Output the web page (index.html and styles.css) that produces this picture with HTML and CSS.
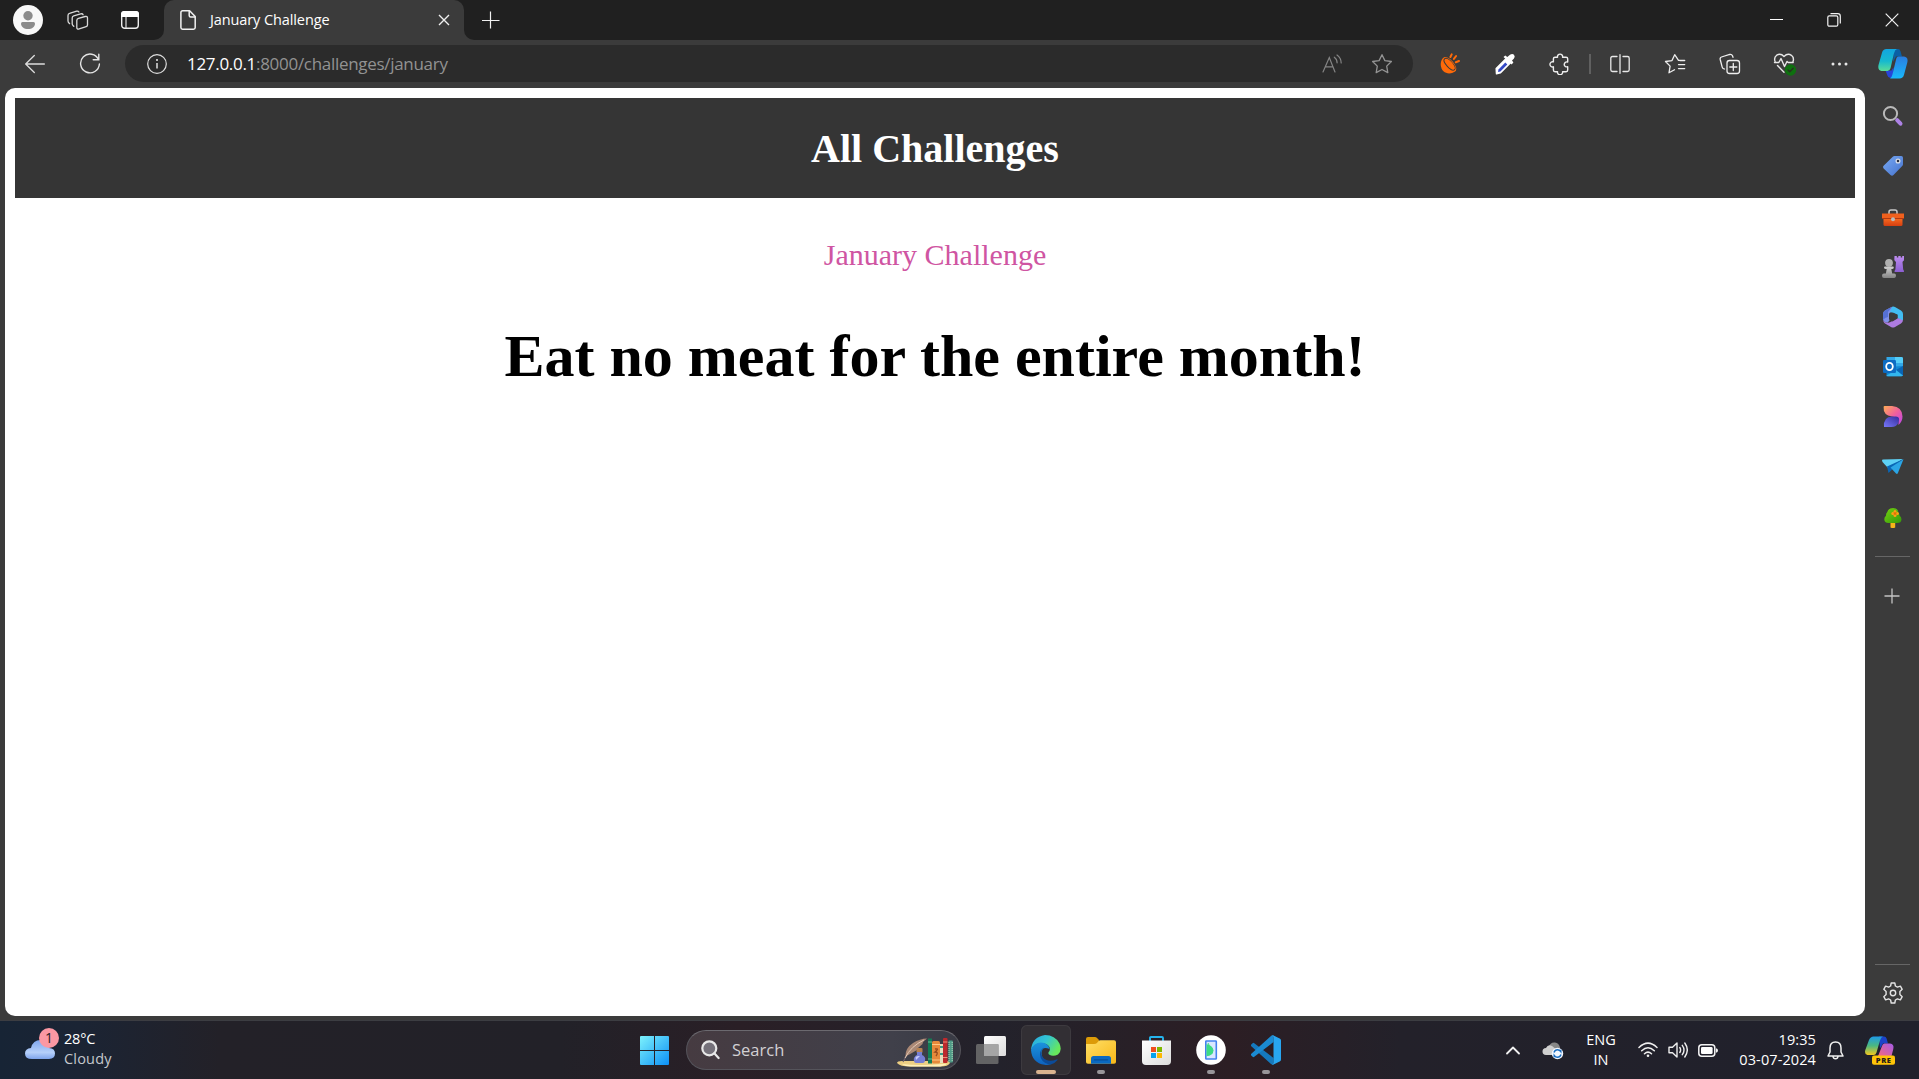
FILE: index.html
```html
<!DOCTYPE html>
<html lang="en">
<head>
<meta charset="utf-8">
<title>January Challenge</title>
<link rel="stylesheet" href="styles.css">
</head>
<body>
<svg width="0" height="0" class="defs" aria-hidden="true">
  <defs>
    <linearGradient id="cpA" x1="0" y1="0" x2="0" y2="1"><stop offset="0" stop-color="#12a5e0"/><stop offset=".55" stop-color="#16b9cf"/><stop offset="1" stop-color="#5bdc98"/></linearGradient>
    <linearGradient id="cpB" x1="0" y1="0" x2="0" y2="1"><stop offset="0" stop-color="#2a7de0"/><stop offset="1" stop-color="#19b8fb"/></linearGradient>
    <linearGradient id="cpC" x1="0" y1="0" x2="0" y2="1"><stop offset="0" stop-color="#1e9be8"/><stop offset=".5" stop-color="#4bb880"/><stop offset="1" stop-color="#f4c81e"/></linearGradient>
    <linearGradient id="cpD" x1="1" y1="0" x2="0" y2="1"><stop offset="0" stop-color="#a45be8"/><stop offset="1" stop-color="#ff6a70"/></linearGradient>
    <linearGradient id="tagG" x1="0" y1="0" x2="1" y2="1"><stop offset="0" stop-color="#79aaf4"/><stop offset="1" stop-color="#4572cc"/></linearGradient>
    <linearGradient id="purG" x1="0" y1="0" x2="0" y2="1"><stop offset="0" stop-color="#bd8cf0"/><stop offset="1" stop-color="#8c5fd2"/></linearGradient>
    <linearGradient id="grayG" x1="0" y1="0" x2="0" y2="1"><stop offset="0" stop-color="#d0d0d0"/><stop offset="1" stop-color="#858585"/></linearGradient>
    <linearGradient id="boxG" x1="0" y1="0" x2="0" y2="1"><stop offset="0" stop-color="#f5671f"/><stop offset="1" stop-color="#d63f10"/></linearGradient>
    <linearGradient id="desA" x1="0" y1="0" x2="1" y2="1"><stop offset="0" stop-color="#ffad55"/><stop offset=".5" stop-color="#f0619b"/><stop offset="1" stop-color="#b945ee"/></linearGradient>
    <linearGradient id="desB" x1="0" y1="1" x2="1" y2="0"><stop offset="0" stop-color="#7778fa"/><stop offset="1" stop-color="#352b9c"/></linearGradient>
    <linearGradient id="winG" x1="0" y1="0" x2="1" y2="1"><stop offset="0" stop-color="#7df2fc"/><stop offset="1" stop-color="#0c8ff5"/></linearGradient>
    <linearGradient id="cloudG" x1="0" y1="0" x2="0" y2="1"><stop offset="0" stop-color="#7ea6ee"/><stop offset=".65" stop-color="#b6d0fa"/><stop offset="1" stop-color="#7ea4ec"/></linearGradient>
    <linearGradient id="edgeG" x1="0" y1="0" x2="1" y2=".5"><stop offset="0" stop-color="#28a7de"/><stop offset=".5" stop-color="#32c4d4"/><stop offset="1" stop-color="#67e85c"/></linearGradient>
    <linearGradient id="edgeB" x1="0" y1="0" x2="0" y2="1"><stop offset="0" stop-color="#1b93dc"/><stop offset="1" stop-color="#0e62be"/></linearGradient>
    <linearGradient id="folG" x1="0" y1="0" x2="1" y2="1"><stop offset="0" stop-color="#ffdf66"/><stop offset="1" stop-color="#f7b718"/></linearGradient>
    <linearGradient id="tvG" x1="0" y1="0" x2="1" y2="1"><stop offset="0" stop-color="#fff"/><stop offset="1" stop-color="#dcdcdc"/></linearGradient>
    <linearGradient id="treeG" x1="0" y1="0" x2="1" y2="1"><stop offset="0" stop-color="#75d20f"/><stop offset="1" stop-color="#34990b"/></linearGradient>
  </defs>
</svg>
<div class="desktop">

  <header class="titlebar">
    <div class="titlebar-tools">
      <svg class="avatar" width="30" height="30" viewBox="0 0 30 30"><circle cx="15" cy="15" r="15" fill="#f8f8f8"/><circle cx="15" cy="10.800" r="4.700" fill="#8b8b8b"/><path d="M9.500 17h11q1.500 0 1.500 1.500c0 3.500-3 5.500-7 5.500s-7-2-7-5.500q0-1.500 1.500-1.500z" fill="#8b8b8b"/></svg>
      <svg class="workspaces" width="22" height="20" viewBox="0 0 22 20" fill="none" stroke="#d9d9d9" stroke-width="1.300" stroke-linejoin="round" stroke-linecap="round"><path d="M11.500 8.300l6.600-1.800q2.400-.6 2.400 1.600v7q0 1.200-1.300 1.600l-7 2.200q-2.400.8-2.400-1.500v-7q0-1.600 1.700-2.100z"/><path d="M6.800 16.300l-.6-.6q-1-.9-1-2V7.900q0-1.500 1.500-2l7-2q1.800-.5 2.400.8"/><path d="M2.600 13.600q-1.600-1-1.600-2.500V5.400Q1 3.800 2.500 3.400l7.200-2.200q1.500-.4 2.200.8"/></svg>
      <svg width="18" height="18" viewBox="0 0 18 18"><rect x=".7" y=".7" width="16.600" height="16.600" rx="3" fill="none" stroke="#eee" stroke-width="1.400"/><path d="M0 6V3q0-3 3-3h12q3 0 3 3v3z" fill="#fff"/><path d="M5 6v11" stroke="#ddd" stroke-width="1.200"/></svg>
    </div>
    <div class="tab">
      <svg width="16" height="20" viewBox="0 0 16 20" fill="none" stroke="#f2f2f2" stroke-width="1.500" stroke-linejoin="round"><path d="M2.600.8h7L15.200 6.500v11q0 1.700-1.700 1.700H2.600Q.9 19.200.9 17.500v-15Q.9.8 2.600.8z"/><path d="M9.200 1v4.400q0 1.500 1.500 1.500H15"/></svg>
      <span class="tab-title">January Challenge</span>
      <svg class="tab-close" width="12" height="12" viewBox="0 0 12 12" stroke="#f0f0f0" stroke-width="1.400"><path d="M1 1l10 10M11 1L1 11"/></svg>
    </div>
    <svg class="new-tab" width="18" height="18" viewBox="0 0 18 18" stroke="#f0f0f0" stroke-width="1.200"><path d="M8.500.5v17M0 9.500h17.500"/></svg>
    <div class="window-buttons">
      <span class="window-button"><svg width="13" height="13" viewBox="0 0 13 13"><path d="M0 6.500h13" stroke="#fff"/></svg></span>
      <span class="window-button"><svg width="14" height="14" viewBox="0 0 14 14" fill="none" stroke="#f2f2f2" stroke-width="1.200"><rect x=".8" y="2.800" width="10" height="10.400" rx="1.500"/><path d="M3.500.7h7.300q2.500 0 2.500 2.500v7.300"/></svg></span>
      <span class="window-button"><svg width="14" height="14" viewBox="0 0 14 14" stroke="#f2f2f2" stroke-width="1.200"><path d="M.7.7l12.600 12.600M13.300.7L.7 13.300"/></svg></span>
    </div>
  </header>

  <nav class="toolbar">
    <span class="slot"><svg width="20" height="20" viewBox="0 0 20 20" fill="none" stroke="#ddd" stroke-width="1.300" stroke-linecap="round" stroke-linejoin="round"><path d="M19.400 10H.8M9.300 1.500L.7 10l8.600 8.500"/></svg></span>
    <span class="slot"><svg width="22" height="22" viewBox="0 0 22 22" fill="none" stroke="#e4e4e4" stroke-width="1.400" stroke-linecap="round"><path d="M19.600 6.600A9.400 9.400 0 1 0 20.400 11M19.800 1.200v5.600h-5.600"/></svg></span>
    <div class="address">
      <svg width="20" height="20" viewBox="0 0 20 20"><circle cx="10" cy="10" r="9.300" fill="none" stroke="#dedede" stroke-width="1.200"/><circle cx="10" cy="6.100" r="1" fill="#eee"/><path d="M10 8.900v5.600" stroke="#eee" stroke-width="1.400"/></svg>
      <span class="url"><span class="url-host">127.0.0.1</span><span class="url-path">:8000/challenges/january</span></span>
      <svg class="read-aloud" width="20" height="20" viewBox="0 0 20 20" fill="none" stroke="#858585" stroke-width="1.200" stroke-linecap="round"><path d="M1 18L7.300 3.500 13 18M3.300 12.900h7.500M12.300 3.200q2.800 2 2.800 5.600M15 1q4.200 3 4.200 8"/></svg>
      <svg width="22" height="22" viewBox="0 0 22 22" fill="none" stroke="#949494" stroke-width="1.300" stroke-linejoin="round"><path d="M11 1.700l2.900 5.900 6.500.9-4.700 4.600 1.100 6.500-5.800-3.100-5.800 3.100 1.100-6.500L1.600 8.500l6.500-.9z"/></svg>
    </div>
    <span class="slot"><svg width="22" height="22" viewBox="0 0 22 22"><path d="M4 5C.8 8.500 1 15 4.500 18.300 8 21.500 13.500 21 17 17.500z" fill="#ff6a09"/><ellipse cx="10.500" cy="11.300" rx="9" ry="4.200" transform="rotate(47 10.500 11.300)" fill="#ff6a09"/><ellipse cx="10.500" cy="11.300" rx="7.300" ry="2.900" transform="rotate(47 10.500 11.300)" fill="none" stroke="#3b3b3b" stroke-width="1.100"/><ellipse cx="10.800" cy="11" rx="6.700" ry="2.500" transform="rotate(47 10.800 11)" fill="#ff6a09"/><path d="M11.400 4l1.300-2.600M14.900 5.900l2.200-2.900M16.800 9.300l3.200-1.300" stroke="#ff6a09" stroke-width="2" stroke-linecap="round"/></svg></span>
    <span class="slot"><svg width="22" height="22" viewBox="0 0 22 22"><path d="M2.200 15.600L12.700 5l4.300 4.300L6.500 19.800l-4 1z" fill="#fff" stroke="#fff" stroke-width="1.500" stroke-linejoin="round"/><path d="M4.500 16.500l6.800-6.900 2 2-6.900 6.900-2.400.6z" fill="#3449c6"/><path d="M9.500 4l1.800-1.500 2 1.500L16 1.800q2.300-1.600 4 0 1.600 1.800-.2 4L18 7.600l1.400 2-1.800 1.800z" fill="#fff"/></svg></span>
    <span class="slot"><svg width="22" height="22" viewBox="0 0 22 22" fill="none" stroke="#eee" stroke-width="1.400" stroke-linejoin="round"><path d="M8.500 4.200a2.600 2.600 0 1 1 5.100 0h3.500q1.600 0 1.600 1.600v3.300a2.500 2.500 0 1 0 0 4.600v3.400q0 1.600-1.600 1.600h-3.500a2.600 2.600 0 1 1-5.100 0H6q-1.600 0-1.600-1.600v-3.300a2.600 2.600 0 1 1 0-4.900V5.800q0-1.600 1.600-1.600z"/></svg></span>
    <span class="toolbar-divider"></span>
    <span class="slot"><svg width="20" height="20" viewBox="0 0 20 20" fill="none" stroke="#e8e8e8" stroke-width="1.300" stroke-linecap="round"><path d="M7 2.500H2.500Q.8 2.500.8 4.200v11.600q0 1.700 1.700 1.700H7M13 2.500h4.500q1.700 0 1.700 1.700v11.600q0 1.700-1.700 1.700H13M10 .7v18.600"/></svg></span>
    <span class="slot"><svg width="22" height="22" viewBox="0 0 22 22" fill="none" stroke="#eee" stroke-width="1.300" stroke-linejoin="round" stroke-linecap="round"><path d="M20.500 7.300h-6L10.700 1.700 8 7.600l-6.500.9 4.600 4.600L5 19.800l5.500-3M14.500 11.600h6.200M14.500 15.600h6.200M16 7.500h4.700"/></svg></span>
    <span class="slot"><svg width="22" height="22" viewBox="0 0 22 22" fill="none" stroke="#eee" stroke-width="1.300" stroke-linecap="round"><rect x="8" y="7.500" width="12.500" height="13" rx="2.500"/><path d="M14.300 10.500v7M10.800 14h7M5.500 16l-1-.3q-1-.4-1.300-1.500L1.200 6.500Q.8 4.500 2.500 4l8.200-2.500q2-.4 2.800 1.300l.5 1.500"/></svg></span>
    <span class="slot"><svg width="24" height="24" viewBox="0 0 24 24" fill="none" stroke="#e8e8e8" stroke-width="1.400" stroke-linejoin="round" stroke-linecap="round"><path d="M2.200 10Q.5 5.500 3.700 3.200 7.600.9 11 4.500q3.600-3.600 7.400-1.200 3.100 2.400 1.500 6.700M1.500 10.500h4.300L8 6.500l3.500 8 2.500-5 1.200 1h5M4.500 13.500l6.500 6.700"/><circle cx="17.500" cy="18" r="5.700" fill="#0e700f" stroke="none"/><path d="M15 18l1.800 1.800 3.400-3.500" stroke="#28301f" stroke-width="1.300"/></svg></span>
    <span class="slot"><svg width="17" height="4" viewBox="0 0 17 4" fill="#e8e8e8"><circle cx="2" cy="2" r="1.500"/><circle cx="8.500" cy="2" r="1.500"/><circle cx="15" cy="2" r="1.500"/></svg></span>
    <span class="slot copilot-slot"><svg width="30" height="31" viewBox="0 0 30 29" preserveAspectRatio="none"><path d="M16 1h4q2 0 2.500 2L24 8h-6l-3 5z" fill="#0a5fa5"/><path d="M7.500 21h6l2-3v10h-3q-2.500 0-3.200-2.500z" fill="#2745d8"/><path d="M8.500 1H19q-2 .5-3 4l-3.500 14q-.8 2.500-3 2.500H3.500Q-.5 21 .5 16L4 4.500Q5 1 8.500 1z" fill="url(#cpA)"/><path d="M20.500 8H26q4.500.5 3.300 5.500L26 25q-1 3.500-4.500 3.500H12q1.800-1 2.500-4L18 11q.6-3 2.500-3z" fill="url(#cpB)"/></svg></span>
  </nav>

  <div class="workspace">
    <main class="page">
      <div class="page-header"><h1 class="page-heading">All Challenges</h1></div>
      <p class="challenge-name">January Challenge</p>
      <h2 class="challenge-text">Eat no meat for the entire month!</h2>
    </main>

    <aside class="sidebar">
      <span class="app"><svg width="22" height="22" viewBox="0 0 22 22"><circle cx="8.500" cy="8.500" r="6.600" fill="none" stroke="#b9b9b9" stroke-width="2"/><path d="M15.200 15.200l3.300 3.500" stroke="#ad82e5" stroke-width="4" stroke-linecap="round"/></svg></span>
      <span class="app"><svg width="22" height="22" viewBox="0 0 22 22"><path d="M12.500 1h6.800q1.700 0 1.700 1.700v6.500q0 1-.8 1.800L11.500 20q-1.500 1.500-3 0L1.600 13.500q-1.300-1.400 0-2.700L10.800 1.700q.7-.7 1.700-.7z" fill="url(#tagG)"/><circle cx="16" cy="6" r="1.900" fill="#2a3040" stroke="#d9dde5" stroke-width="1.300"/></svg></span>
      <span class="app"><svg class="toolbox" width="22" height="20" viewBox="0 0 22 20"><path d="M7 6V4q0-2 2-2h4q2 0 2 2v2" fill="none" stroke="#c9c9c9" stroke-width="1.500"/><path d="M0 5.500h22v5.500H0z" fill="#f0601d"/><path d="M1.500 11h19v5.500q0 1.500-1.500 1.500H3q-1.500 0-1.500-1.500z" fill="url(#boxG)"/><path d="M0 10.500h22" stroke="#b23a10"/><circle cx="11" cy="11.300" r="2" fill="#bbb"/></svg></span>
      <span class="app"><svg width="22" height="22" viewBox="0 0 22 22"><path d="M12.500 0h2.300v1.500h1.500V0h2.400v1.500h1.500V0H22v3.500q0 1.500-1 1.800l-.5.7.7 7.500q.8.5.8 2.500h-9.500q0-2 .9-2.500L14 6l-1-1q-.7-.5-.7-1.700z" fill="url(#purG)"/><circle cx="7" cy="6.800" r="3.900" fill="#b0b0b0"/><path d="M3 10.500h8q.8 0 .8 1.200 0 1-1.300 1.300H9.300l.9 4.500h2q1.800 0 1.800 2.300t-2 2.200H2Q0 22 0 19.800t2-2.300h1.900l.8-4.500H3.300Q2 12.800 2 11.700q0-1.200 1-1.200z" fill="url(#grayG)"/></svg></span>
      <span class="app"><svg width="22" height="22" viewBox="0 0 22 22"><path d="M9.500 1L3 4.500Q1 5.700 1 8v6q1 2.500 4.500 2.800l2-2.300V7.500L14 4z" fill="#7f8fe8"/><path d="M10 .8q1.500-.7 3 .2l6 3.500q2 1.200 2 3.500v6.500q-3.500 0-5.500-2.500V8.500L8 6z" fill="#42bdf2"/><path d="M10 .8L6 6v5q-3 .3-5 3V8q0-2.300 2-3.500z" fill="#5570d4"/><path d="M1.200 14.500Q3 17 6 16.800q2-.2 4-1.500l5.500-3.300q3 .5 5.500 2.500-.2 1.800-2 2.900L13 21q-2 1-4 0l-6-3.500q-1.500-1-1.800-3z" fill="#ad7be0"/><path d="M8 6.500l3.500.2 4 2.300v3.500L10.500 15.500 7 13.300V8z" fill="#3b3b3b"/></svg></span>
      <span class="app"><svg width="22" height="22" viewBox="0 0 22 22"><path d="M4.500 1h15q1.500 0 1.500 1.500V12H4.500z" fill="#32a8e8"/><path d="M13 1h6.500Q21 1 21 2.500V7h-8z" fill="#54cdf8"/><path d="M4.500 11L21 10v9.500l-1.500.8h-15z" fill="#1187d3"/><path d="M14 14l7-4v8.500q0 1.500-1.500 1.500z" fill="#0964b4"/><path d="M4.500 19.500L14 14l7 5.500q-.5.700-1.500.700H6q-1.500 0-1.500-.7z" fill="#32b6ee"/><rect x="1" y="4" width="13" height="13" rx="1.300" fill="#0d6cc3"/><ellipse cx="7.500" cy="10.500" rx="3.300" ry="3.600" fill="none" stroke="#fff" stroke-width="1.800"/></svg></span>
      <span class="app"><svg width="20" height="22" viewBox="0 0 20 22"><path d="M1.500 0H9q10.500 1 10.500 10.500 0 5-4 8.500 1.500-8-6.500-8.500Q0 9.500.6.800 1 0 1.500 0z" fill="url(#desA)"/><path d="M1 21q-1-10 8-10.500h4q4.500 0 2.500 6Q13.500 21 8.500 21z" fill="url(#desB)"/></svg></span>
      <span class="app"><svg width="22" height="18" viewBox="0 0 22 18"><path d="M0 2.500q0-.8 1-1L21 1 6 10 .5 4z" fill="#5ed1f5"/><path d="M21.500 1L5 8.500 6.500 15z" fill="#0a66b5"/><path d="M21.500 1.300L8.500 9.500l5.500 6q1.200 1 1.900-.5z" fill="#2ba5e5"/></svg></span>
      <span class="app"><svg width="20" height="22" viewBox="0 0 20 22"><path d="M7.500 15h4.700v5.500q-2.300 1-4.700 0z" fill="#f6b519"/><path d="M10 1q4.800 0 5.300 4.200 1.200.9 1.200 3.300 2 1.300 2 4Q18.300 16 14 16H5.500Q1.300 15.800 1.300 12.300q0-2.300 1.700-3.600Q2.700 6.500 4.300 5 5.500 1 10 1z" fill="url(#treeG)"/><g fill="#ff9f14"><circle cx="12" cy="4.400" r="1.500"/><circle cx="14.400" cy="6.500" r="1.500"/><circle cx="12" cy="8.600" r="1.500"/><circle cx="9.800" cy="6.500" r="1.500"/></g><circle cx="12" cy="6.500" r="1.300" fill="#e56c05"/></svg></span>
      <span class="sidebar-rule"></span>
      <span class="sidebar-add"><svg width="16" height="16" viewBox="0 0 16 16" stroke="#c4c4c4" stroke-width="1.300"><path d="M8 .5v15M.5 8h15"/></svg></span>
      <span class="sidebar-rule sidebar-rule-end"></span>
      <span class="sidebar-settings"><svg width="22" height="22" viewBox="0 0 22 22" fill="none" stroke="#e4e4e4" stroke-width="1.400" stroke-linejoin="round"><path d="M9.200 1h3.600l.6 3 2 1.100 3-1 1.800 3.200-2.300 2.100v3.200l2.300 2.100-1.800 3.200-3-1-2 1.100-.6 3H9.200l-.6-3-2-1.100-3 1-1.800-3.200 2.300-2.100V9.400L1.800 7.300l1.800-3.200 3 1 2-1.100z"/><circle cx="11" cy="11" r="2.700"/></svg></span>
    </aside>
  </div>

  <footer class="taskbar">
    <div class="weather">
      <svg width="36" height="34" viewBox="0 0 36 34"><path d="M8 32q-7 0-7-5.500 0-5 6-5.500 2-8 9.500-8 7 0 8.500 8 6 .3 6 5.500T25 32z" fill="url(#cloudG)"/><circle cx="25" cy="11" r="10" fill="#fb98a3"/><text x="25" y="16" class="badge-text">1</text></svg>
      <div class="weather-text"><span>28°C</span><span class="weather-state">Cloudy</span></div>
    </div>
    <span class="slot"><svg width="29" height="29" viewBox="0 0 29 29"><path d="M1 0h13v14H0V1q0-1 1-1zM15 0h13q1 0 1 1v13H15zM0 15h14v14H1q-1 0-1-1zM15 15h14v13q0 1-1 1H15z" fill="url(#winG)"/></svg></span>
    <div class="search">
      <svg width="19" height="20" viewBox="0 0 19 20" fill="none" stroke="#e8e8e8" stroke-width="2.200" stroke-linecap="round"><circle cx="8.300" cy="8.300" r="7" fill="#75717a"/><path d="M13.300 13.300l4.300 4.700"/></svg>
      <span class="search-label">Search</span>
      <svg class="search-art" width="57" height="30" viewBox="0 0 57 30"><path d="M0 26q0-2 5-2h45q4 0 3 2-2 3.500-9 3.500H13Q3 29.500 0 26z" fill="#edcf83"/><path d="M5 27q15 2 45-.3-3 2.800-10 2.800H14q-6 0-9-2.500z" fill="#fff0b9"/><path d="M6 25L12 14" stroke="#72646d" stroke-width="1.200"/><path d="M8.500 18.500Q8.500 11 16 6q7-4.500 14-4.500L26 5l-.5 2L21 11l-1 2-6 3.500-5.500 3z" fill="#aa8875"/><path d="M8 21Q14 9 27 3" stroke="#e6c9b4" fill="none"/><rect x="19.500" y="11" width="6" height="5" rx="1" fill="#b68251"/><path d="M20 15h5v3q3.500 1.500 3.200 4.500-.4 3.500-2.500 3.500h-6.500q-2.300 0-2.400-3.500 0-3 3.200-4.500z" fill="#767ed4"/><path d="M18.500 20q2-1.500 4.500-1l-4 4z" fill="#c6cafb"/><rect x="31" y="1.500" width="4" height="25" fill="#137c55"/><path d="M31 5h4M31 22h4" stroke="#73b892"/><rect x="35" y="4" width="8" height="22.500" rx="1.500" fill="#e68a3b"/><path d="M35 7.500h8M35 23h8" stroke="#ffc783"/><path d="M38 12q5-1 0 3 4 0 1 4" stroke="#96491d" fill="none" stroke-width="1.300"/><rect x="43" y="7" width="3" height="19" fill="#e8dfbd"/><path d="M43 10h3M43 17h3" stroke="#3b9b85" stroke-width="2"/><rect x="46" y="1" width="4.500" height="25" rx="1" fill="#bd292c"/><path d="M46 5h4.500M46 20.500h4.500" stroke="#ed9279"/><rect x="51.500" y="3.500" width="4.500" height="22" rx="1" fill="#4f9b87"/><path d="M52 5v19M55.200 5v19" stroke="#b1d3b7" stroke-dasharray="1 1"/></svg>
    </div>
    <div class="pinned">
      <span class="slot"><svg width="30" height="28" viewBox="0 0 30 28"><rect x="8" y="0" width="22" height="20" rx="1.500" fill="url(#tvG)"/><rect x="0" y="8" width="22.500" height="20" rx="1.500" fill="#6f6f6f" fill-opacity=".85"/><path d="M8 8h14.500v12H8z" fill="#a5a5a5"/></svg></span>
      <span class="slot"><span class="task task-active"><svg width="30" height="30" viewBox="0 0 30 30"><path d="M0 15Q1 2 14 0q10 0 14.500 8.500Q31.500 16 27 19.500q-5 2.500-9 0-1.500-1.500.5-3.500 1.500-4.500-3.500-7Q6 5.500 0 15z" fill="url(#edgeG)"/><path d="M0 15Q2.500 7.500 10 7.500q7.500.5 8.500 6.500-7.500-3.500-8 4 .5 9 9 11.500-3 .8-6 .3Q1 28 0 15z" fill="url(#edgeB)"/><path d="M13 12.500q-5 4-1.500 9.500 5 6 14 2.500 1.800-.7.800.8-2.800 3.700-7 4.500Q9.500 28 9 19.500q0-5 4-7z" fill="#0c4b98"/></svg><i class="task-mark"></i></span></span>
      <span class="slot"><span class="task"><svg width="30" height="27" viewBox="0 0 30 27"><path d="M0 9V2q0-2 2-2h7q1 0 1.800.8L13 3l-1 6z" fill="#dc9b08"/><path d="M0 7h8q2 0 3-1l1.500-2q.7-.7 2-.7H28q2 0 2 2V25q0 1.700-2 1.700H2Q0 26.700 0 25z" fill="url(#folG)"/><path d="M5 26.700V21.500q0-2.500 2.500-2.500h15q2.500 0 2.500 2.500v5.200z" fill="#0a69c1"/><path d="M8.500 22.800h13" stroke="#064f98" stroke-width="1.300" stroke-linecap="round"/></svg><i class="task-mark"></i></span></span>
      <span class="slot"><svg width="29" height="29" viewBox="0 0 29 29"><path d="M8 6V2q0-1 1-1h11q1 0 1 1v4" fill="none" stroke="#25b4ed" stroke-width="1.900"/><path d="M0 4.500h29V25q0 4-4 4H4q-4 0-4-4z" fill="url(#tvG)"/><path d="M9 11h5v5H9z" fill="#f04e1f"/><path d="M15 11h5v5h-5z" fill="#7fb900"/><path d="M9 17h5v5H9z" fill="#08a2ed"/><path d="M15 17h5v5h-5z" fill="#fdb803"/></svg></span>
      <span class="slot"><span class="task"><svg width="30" height="30" viewBox="0 0 30 30"><circle cx="15" cy="15" r="14.800" fill="#fff"/><rect x="9.800" y="6" width="10.500" height="18" rx=".6" fill="#d9e7ff" stroke="#4482ef" stroke-width="1.600"/><path d="M10.500 9q6.500 1.500 7 6.500-.5 5-7 5.800z" fill="#3ddc84"/><path d="M12 8l1 2M15 17l2 1" stroke="#3ddc84"/></svg><i class="task-mark"></i></span></span>
      <span class="slot"><span class="task"><svg width="30" height="30" viewBox="0 0 30 30"><path d="M0 11q-.6-.6 0-1.300l1.600-1.500q.8-.7 1.700 0L22.500 23v6.500L20 29z" fill="#1579bd"/><path d="M0 19q-.6.700 0 1.300l1.600 1.500q.8.700 1.700 0L22.500 7V.5L20 1z" fill="#1b8bd2"/><path d="M22 .3L28.700 3.500Q30 4 30 5.500v19q0 1.500-1.300 2L22 29.700q-1 .3-2-.7 2.500 1 2.500-1.500v-25Q22.500 0 20 1q1-1 2-.7z" fill="#28a6f0"/></svg><i class="task-mark"></i></span></span>
    </div>
    <div class="tray">
      <span class="tray-slot"><svg width="14" height="9" viewBox="0 0 14 9" fill="none" stroke="#f0f0f0" stroke-width="1.800" stroke-linecap="round" stroke-linejoin="round"><path d="M1 7.500l6-6 6 6"/></svg></span>
      <span class="tray-slot"><svg width="22" height="20" viewBox="0 0 22 20"><path d="M7 7q1-5 6-4.500 4 .5 5 5 1 4-3 6H7z" fill="#878787"/><path d="M4 15q-3.500-.3-3.500-3.500T4 8q2-4 6-2l5 4-2 5z" fill="#cfcfcf"/><circle cx="15.500" cy="13.500" r="5.700" fill="#f2f7ff"/><path d="M12 12.500q1-2.800 3.500-2.800 2 0 3.300 1.800V9.700M19 14.500q-1 2.800-3.500 2.800-2 0-3.300-1.800v1.800" fill="none" stroke="#176cc0" stroke-width="1.400"/></svg></span>
      <span class="language"><span>ENG</span><span>IN</span></span>
      <span class="status-slot"><svg width="20" height="16" viewBox="0 0 20 16" fill="none" stroke="#eee" stroke-width="1.500" stroke-linecap="round"><path d="M1 5.500q9-8.800 18 0M3.700 8.700q6.300-6 12.600 0M6.500 11.700q3.500-3.200 7 0"/><circle cx="10" cy="13.800" r="1.300" fill="#eee" stroke="none"/></svg></span>
      <span class="status-slot"><svg width="20" height="18" viewBox="0 0 20 18" fill="none" stroke="#eee" stroke-width="1.400" stroke-linecap="round" stroke-linejoin="round"><path d="M1 6.300h3.500L9 2v14l-4.500-4.300H1zM11.800 6.500q1.600 2.500 0 5M14.300 4.300q3.400 4.700 0 9.400M16.800 2q5 7 0 14"/></svg></span>
      <span class="status-slot"><svg width="20" height="13" viewBox="0 0 20 13"><rect x=".8" y=".8" width="16" height="11.400" rx="3" fill="none" stroke="#f4f4f4" stroke-width="1.500"/><rect x="3" y="3" width="11.600" height="7" rx="1.300" fill="#fff"/><path d="M18 4.200q2 .2 2 2.300t-2 2.300z" fill="#f4f4f4"/></svg></span>
      <span class="clock"><span>19:35</span><span>03-07-2024</span></span>
      <span class="tray-slot"><svg width="17" height="19" viewBox="0 0 17 19" fill="none" stroke="#f0f0f0" stroke-width="1.500" stroke-linejoin="round"><path d="M8.500 1q5.500 0 5.500 6v4l2 4H1l2-4V7q0-6 5.500-6zM6 15.500q.3 2.300 2.500 2.300t2.500-2.300"/></svg></span>
      <span class="copilot"><svg width="30" height="29" viewBox="0 0 30 29"><path d="M14 .5h5q2 0 2.600 2L23 7.500h-5l-3 5z" fill="#1b43c9"/><path d="M8.500.5H18q-2 .5-3 4l-3.500 12q-.8 2.500-3 2.500H2.500Q-.8 18.500.3 14L4 4Q5.500.5 8.500.5z" fill="url(#cpC)"/><path d="M19.500 7.500H25q4.500.5 3.300 5.500L26 22H11q2-1 2.700-3.500L17 10q.7-2.500 2.500-2.500z" fill="url(#cpD)"/><rect x="7" y="19.500" width="23" height="9.200" rx="2" fill="#ffc408"/><text x="18.700" y="26.800" class="pre-text">PRE</text></svg></span>
    </div>
  </footer>
</div>
</body>
</html>
```
FILE: styles.css
```css
* { box-sizing: border-box; }
body {
  margin: 0;
  font-family: "Open Sans", "Noto Sans", sans-serif;
  color: #fff;
  background: #3b3b3b;
}
svg { display: block; flex: none; }
.defs { position: absolute; }

.desktop {
  width: 1919px;
  height: 1079px;
  display: flex;
  flex-direction: column;
  overflow: hidden;
}

/* Tab strip */
.titlebar {
  height: 40px;
  display: flex;
  align-items: center;
  background: linear-gradient(90deg, #3b3b3b 480px, #202020 480px);
}
.titlebar-tools {
  width: 164px;
  height: 40px;
  padding-left: 13px;
  display: flex;
  align-items: center;
  border-bottom-right-radius: 10px;
  background: #202020;
}
.workspaces { margin: 0 32px 0 24px; }
.tab {
  width: 300px;
  height: 40px;
  padding: 0 14px 0 16px;
  display: flex;
  align-items: center;
  background: #3b3b3b;
  border-radius: 10px 10px 0 0;
  box-shadow: -5px -30px 0 #202020, 5px -30px 0 #202020;
}
.tab-title {
  margin-left: 14px;
  font-size: 14.500px;
  letter-spacing: -0.100px;
  line-height: 20px;
  white-space: nowrap;
}
.tab-close { margin-left: auto; }
.new-tab {
  width: 36px;
  height: 40px;
  padding: 11px 0 11px 18px;
  box-sizing: border-box;
  overflow: visible;
  background: #202020;
  border-bottom-left-radius: 10px;
}
.window-buttons { margin: 0 -1.500px 0 auto; display: flex; }
.window-button {
  width: 57.500px;
  display: flex;
  justify-content: center;
}

/* Navigation bar */
.toolbar {
  height: 48px;
  padding: 0 0 1px 7.500px;
  display: flex;
  align-items: center;
  background: #3b3b3b;
}
.slot {
  width: 55px;
  flex: none;
  display: flex;
  justify-content: center;
  align-items: center;
}
.copilot-slot { width: 52px; }
.address {
  width: 1288px;
  height: 37px;
  flex: none;
  margin: 0 9.500px 0 7.500px;
  padding: 0 20px 0 22px;
  display: flex;
  align-items: center;
  border-radius: 19px;
  background: #2b2b2b;
}
.url {
  margin-left: 20px;
  font-size: 17px;
  letter-spacing: -0.300px;
  line-height: 24px;
  white-space: nowrap;
}
.url-path { color: #929292; }
.read-aloud { margin-left: auto; margin-right: 29px; }
.toolbar-divider {
  width: 1.500px;
  height: 20px;
  flex: none;
  margin: 0 1.500px;
  background: #606060;
}

/* Page and sidebar */
.workspace {
  height: 932px;
  padding-left: 5px;
  display: flex;
  background: #3b3b3b;
}
.page {
  width: 1860px;
  height: 928px;
  padding: 10px;
  border-radius: 10px;
  background: #fff;
  color: #000;
  font-family: "Liberation Serif", serif;
  text-align: center;
}
.page-header {
  height: 100px;
  padding-top: 2px;
  display: flex;
  align-items: center;
  justify-content: center;
  background: #353535;
  color: #fff;
}
.page-heading { margin: 0; font-size: 40px; line-height: 46px; }
.challenge-name {
  margin: 40px 0 0;
  font-size: 30px;
  line-height: 34px;
  color: #cf55a2;
}
.challenge-text {
  margin: 50px 0 0;
  font-size: 60px;
  line-height: 69px;
}
.sidebar {
  width: 54px;
  height: 932px;
  padding-top: 3px;
  display: flex;
  flex-direction: column;
  align-items: center;
}
.app {
  height: 50.200px;
  display: flex;
  align-items: center;
  padding-left: 2px;
}
.toolbox { margin-top: 3px; }
.sidebar-rule {
  width: 35px;
  height: 1px;
  margin-top: 13px;
  background: #666;
}
.sidebar-add { margin-top: 31px; }
.sidebar-rule-end { margin-top: auto; }
.sidebar-settings { margin: 17px 0 16px 1px; }

/* Taskbar */
.taskbar {
  height: 59px;
  padding-right: 14px;
  display: flex;
  align-items: center;
  background: linear-gradient(90deg, #172435 0, #1b2434 80px, #232128 220px, #222128 560px, #2a1f26 740px, #23222b 1000px, #2c1e24 1230px, #23212a 1400px, #20212c 1919px);
  border-top: 1px solid #3c3d42;
}
.weather {
  width: 627px;
  padding: 0 0 4px 24px;
  display: flex;
  align-items: flex-start;
}
.badge-text {
  font: 14px "Open Sans", sans-serif;
  fill: #2a2024;
  text-anchor: middle;
}
.weather-text {
  margin: 2px 0 0 4px;
  display: flex;
  flex-direction: column;
  font-size: 14.500px;
  letter-spacing: -0.200px;
  line-height: 20px;
}
.weather-state { color: #c5c8cd; letter-spacing: 0.200px; }
.search {
  width: 275px;
  height: 40px;
  margin: 0 2.500px 0 4px;
  padding: 0 6px 0 14px;
  display: flex;
  align-items: center;
  border: 1px solid #55545b;
  border-top-color: #6b696f;
  border-radius: 20px;
  background: linear-gradient(90deg, #463b41, #40404a 75%, #393b45);
}
.search-label {
  margin-left: 12px;
  font-size: 16.500px;
  line-height: 22px;
  color: #d2d0d3;
}
.search-art { margin: 4px 0 0 auto; }
.pinned { display: flex; align-items: center; }
.task {
  width: 50px;
  height: 50px;
  position: relative;
  display: flex;
  align-items: center;
  justify-content: center;
}
.task-active {
  border-radius: 6px;
  background: #322f34;
  box-shadow: inset 0 0 0 1px #3d3a3f;
}
.task-mark {
  position: absolute;
  left: 21px;
  bottom: 1px;
  width: 8px;
  height: 4px;
  border-radius: 2px;
  background: #989599;
}
.task-active .task-mark { left: 15px; width: 20px; background: #d9b38f; }
.tray {
  margin-left: auto;
  display: flex;
  align-items: center;
}
.tray-slot { width: 40px; display: flex; justify-content: center; }
.status-slot { width: 30px; display: flex; justify-content: center; }
.language {
  width: 56px;
  margin-right: 4px;
  display: flex;
  flex-direction: column;
  align-items: center;
  font-size: 14.500px;
  line-height: 20px;
}
.clock {
  width: 93px;
  margin-right: -1px;
  display: flex;
  flex-direction: column;
  align-items: flex-end;
  font-size: 14.500px;
  letter-spacing: 0.100px;
  line-height: 20px;
  white-space: nowrap;
}
.copilot { width: 50px; display: flex; justify-content: center; }
.pre-text {
  font: 800 7.500px "Open Sans", sans-serif;
  fill: #272016;
  text-anchor: middle;
  letter-spacing: .6px;
}
```
